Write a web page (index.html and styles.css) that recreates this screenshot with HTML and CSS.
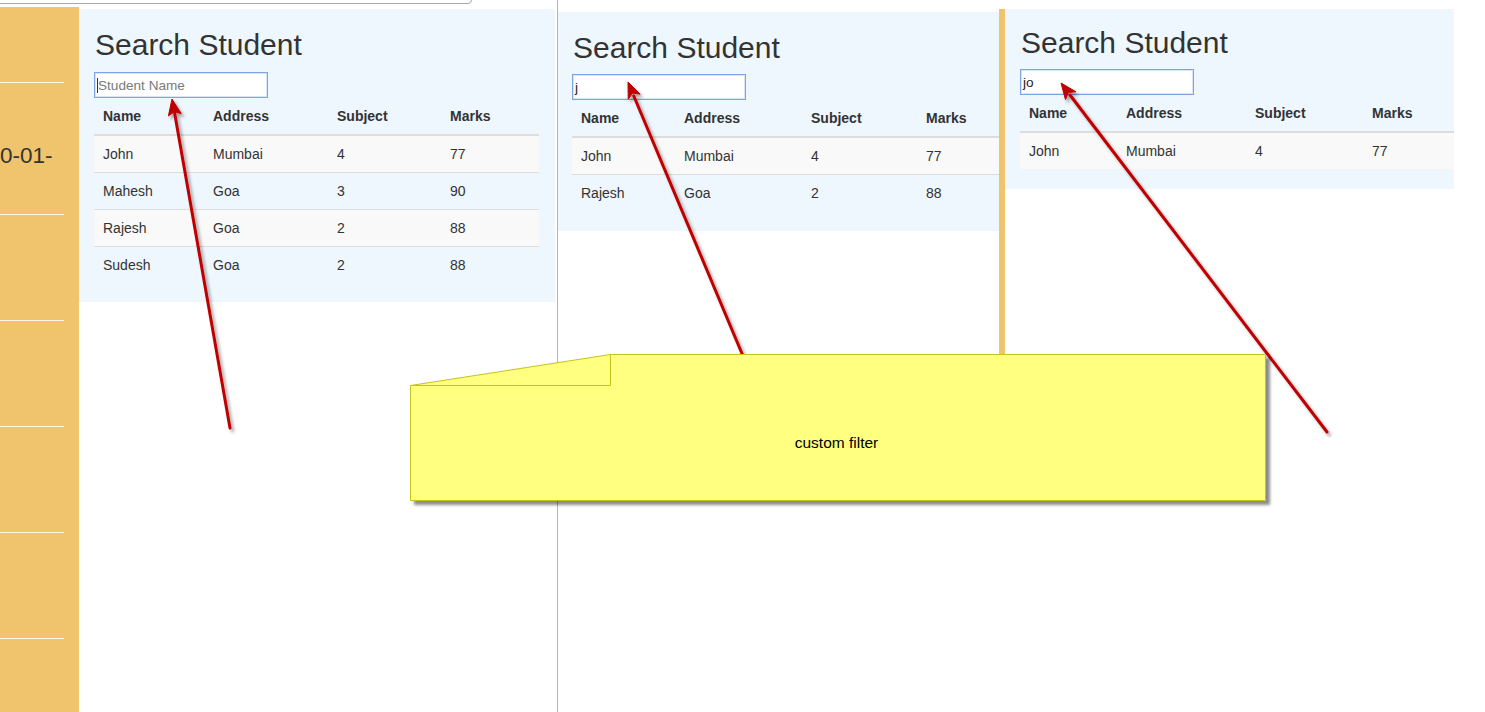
FILE: index.html
```html
<!DOCTYPE html>
<html lang="en">
<head>
<meta charset="utf-8">
<title>Search Student – custom filter</title>
<link rel="stylesheet" href="styles.css">
</head>
<body>
<div class="canvas">
  <div class="browser-bar"></div>

  <section class="shot shot-left">
    <nav class="sidebar">
      <div class="side-item side-item--first"></div>
      <div class="side-item side-item--date"><span>0-01-</span></div>
      <div class="side-item"></div>
      <div class="side-item"></div>
      <div class="side-item"></div>
      <div class="side-item"></div>
    </nav>
    <div class="panel panel-left">
      <h2 class="title">Search Student</h2>
      <div class="search"><span class="caret"></span><span class="placeholder">Student Name</span></div>
      <table class="grid grid-left">
        <colgroup><col class="c1"><col class="c2"><col class="c3"><col class="c4"></colgroup>
        <thead><tr><th>Name</th><th>Address</th><th>Subject</th><th>Marks</th></tr></thead>
        <tbody>
          <tr><td>John</td><td>Mumbai</td><td>4</td><td>77</td></tr>
          <tr><td>Mahesh</td><td>Goa</td><td>3</td><td>90</td></tr>
          <tr><td>Rajesh</td><td>Goa</td><td>2</td><td>88</td></tr>
          <tr><td>Sudesh</td><td>Goa</td><td>2</td><td>88</td></tr>
        </tbody>
      </table>
    </div>
  </section>

  <section class="shot shot-mid">
    <div class="panel panel-mid">
      <h2 class="title">Search Student</h2>
      <div class="search"><span class="value">j</span></div>
      <table class="grid grid-mid">
        <colgroup><col class="c1"><col class="c2"><col class="c3"><col class="c4"></colgroup>
        <thead><tr><th>Name</th><th>Address</th><th>Subject</th><th>Marks</th></tr></thead>
        <tbody>
          <tr><td>John</td><td>Mumbai</td><td>4</td><td>77</td></tr>
          <tr><td>Rajesh</td><td>Goa</td><td>2</td><td>88</td></tr>
        </tbody>
      </table>
    </div>
  </section>

  <section class="shot shot-right">
    <div class="bar"></div>
    <div class="panel panel-right">
      <h2 class="title">Search Student</h2>
      <div class="search"><span class="value">jo</span></div>
      <table class="grid grid-right">
        <colgroup><col class="c1"><col class="c2"><col class="c3"><col class="c4"></colgroup>
        <thead><tr><th>Name</th><th>Address</th><th>Subject</th><th>Marks</th></tr></thead>
        <tbody>
          <tr><td>John</td><td>Mumbai</td><td>4</td><td>77</td></tr>
        </tbody>
      </table>
    </div>
  </section>

  <svg class="overlay" width="1485" height="712" viewBox="0 0 1485 712" aria-hidden="true">
    <defs>
      <filter id="arrowShadow" x="-20%" y="-20%" width="140%" height="140%">
        <feDropShadow dx="2.5" dy="3" stdDeviation="1.8" flood-color="#000" flood-opacity="0.35"/>
      </filter>
      <filter id="noteShadow" x="-5%" y="-10%" width="110%" height="125%">
        <feDropShadow dx="4" dy="4" stdDeviation="1.6" flood-color="#000" flood-opacity="0.45"/>
      </filter>
    </defs>
    <g class="arrow" filter="url(#arrowShadow)">
      <line x1="230" y1="428" x2="174.6" y2="113"/>
      <polygon points="172,99 181.2,113.6 174.3,111.8 168.4,115.9"/>
    </g>
    <g class="arrow" filter="url(#arrowShadow)">
      <line x1="743" y1="356" x2="633.8" y2="96"/>
      <polygon points="628,82 640.2,94.2 632.6,93.1 628.2,99.3"/>
    </g>
    <g class="arrow" filter="url(#arrowShadow)">
      <line x1="1327" y1="432" x2="1070" y2="95"/>
      <polygon points="1061,83 1075.9,91.8 1068.3,92.5 1065.5,99.7"/>
    </g>
    <g filter="url(#noteShadow)">
      <polygon class="note-shape" points="410.5,385.5 610.5,354.5 1265.5,354.5 1265.5,500.5 410.5,500.5"/>
    </g>
    <polyline class="note-fold" points="610.5,354.5 610.5,385.5 410.5,385.5"/>
  </svg>
  <div class="note-label">custom filter</div>
</div>
</body>
</html>
```

FILE: styles.css
```css
* { box-sizing: border-box; }

body {
  margin: 0;
  font-family: "Liberation Sans", Arial, sans-serif;
  color: #333;
  background: #fff;
}

.canvas {
  position: relative;
  width: 1485px;
  height: 712px;
  overflow: hidden;
  background: #fff;
}

.browser-bar {
  position: absolute;
  left: -4px;
  top: -10px;
  width: 476px;
  height: 14px;
  border: 1px solid #a8a8a8;
  border-bottom-right-radius: 4px;
  background: #fff;
}

.shot {
  position: absolute;
  top: 0;
}

/* ---------- left screenshot ---------- */
.shot-left {
  left: 0;
  width: 556px;
  height: 712px;
  display: flex;
  align-items: flex-start;
}

.sidebar {
  width: 79px;
  height: 705px;
  margin-top: 7px;
  padding-right: 15px;
  background: #f0c36d;
  display: flex;
  flex-direction: column;
  flex: none;
}

.side-item {
  flex: none;
  height: 106px;
  border-bottom: 1px solid rgba(255, 255, 255, 0.85);
}

.side-item--first { height: 76px; }

.side-item--date {
  height: 132px;
  padding-top: 60px;
  font-size: 22.5px;
  line-height: 26px;
  color: #333;
  white-space: nowrap;
}

.panel {
  display: flow-root;
  background: #eef6fe;
  flex: none;
}

.panel-left {
  margin-top: 9px;
  width: 476px;
  padding: 0 16px 0 15px;
}

.title {
  font-size: 30px;
  font-weight: 400;
  line-height: 1.1;
  margin: 19px 0 11px;
  padding-left: 1px;
  color: #333;
}

.search {
  width: 174px;
  height: 26px;
  border: 1px solid #7ea4e4;
  box-shadow: inset 0 0 0 1px #d6e3f8;
  background: #fff;
  display: flex;
  align-items: center;
  padding-left: 2px;
  font-size: 13.6px;
  color: #222;
}

.caret {
  width: 1px;
  height: 15px;
  background: #333;
}

.placeholder { color: #7a7a7a; }

.grid {
  border-collapse: separate;
  border-spacing: 0;
  table-layout: fixed;
  font-size: 14px;
  line-height: 20px;
  margin-bottom: 19px;
}

.grid th {
  text-align: left;
  font-weight: 700;
  padding: 8px;
  border-bottom: 2px solid #ddd;
  color: #333;
}

.grid td {
  padding: 8px;
  border-top: 1px solid #ddd;
  color: #333;
}

.grid th:first-child,
.grid td:first-child { padding-left: 9px; }

.grid tbody tr:first-child td { border-top: 0; }
.grid tbody tr:nth-child(odd) { background: #f9f9f9; }

.grid-left { width: 445px; }
.grid-left .c1 { width: 111px; }
.grid-left .c2 { width: 124px; }
.grid-left .c3 { width: 113px; }
.grid-left .c4 { width: 97px; }

/* ---------- middle screenshot ---------- */
.shot-mid {
  left: 557px;
  width: 443px;
  height: 712px;
  border-left: 1px solid #b4b4b4;
  overflow: hidden;
}

.panel-mid {
  margin-top: 12px;
  width: 490px;
  padding-left: 14px;
}

.panel-mid .title { margin-bottom: 10px; }
.panel-mid .grid { margin-bottom: 20px; }

.grid-mid { width: 456px; }
.grid-mid .c1 { width: 104px; }
.grid-mid .c2 { width: 127px; }
.grid-mid .c3 { width: 115px; }
.grid-mid .c4 { width: 110px; }

/* ---------- right screenshot ---------- */
.shot-right {
  left: 999px;
  top: 9px;
  height: 391px;
  display: flex;
  align-items: flex-start;
}

.bar {
  width: 6px;
  height: 391px;
  background: #f0c36d;
  flex: none;
}

.panel-right {
  width: 449px;
  padding-left: 15px;
  overflow: hidden;
}

.panel-right .title { margin: 17px 0 10px; }
.panel-right .grid { margin-bottom: 20px; }

.grid-right { width: 444px; }
.grid-right .c1 { width: 98px; }
.grid-right .c2 { width: 129px; }
.grid-right .c3 { width: 117px; }
.grid-right .c4 { width: 100px; }

/* ---------- annotations ---------- */
.overlay {
  position: absolute;
  left: 0;
  top: 0;
  pointer-events: none;
}

.arrow line {
  stroke: #c00000;
  stroke-width: 3;
  stroke-linecap: round;
}

.arrow polygon {
  fill: #c00000;
  stroke: #c00000;
  stroke-width: 1;
  stroke-linejoin: round;
}

.note-shape {
  fill: #ffff80;
  stroke: #c3c31c;
  stroke-width: 1;
}

.note-fold {
  fill: none;
  stroke: #c3c31c;
  stroke-width: 1;
}

.note-label {
  position: absolute;
  left: 409px;
  top: 385px;
  width: 855px;
  height: 115px;
  display: flex;
  align-items: center;
  justify-content: center;
  font-size: 15.5px;
  color: #000;
}
```
